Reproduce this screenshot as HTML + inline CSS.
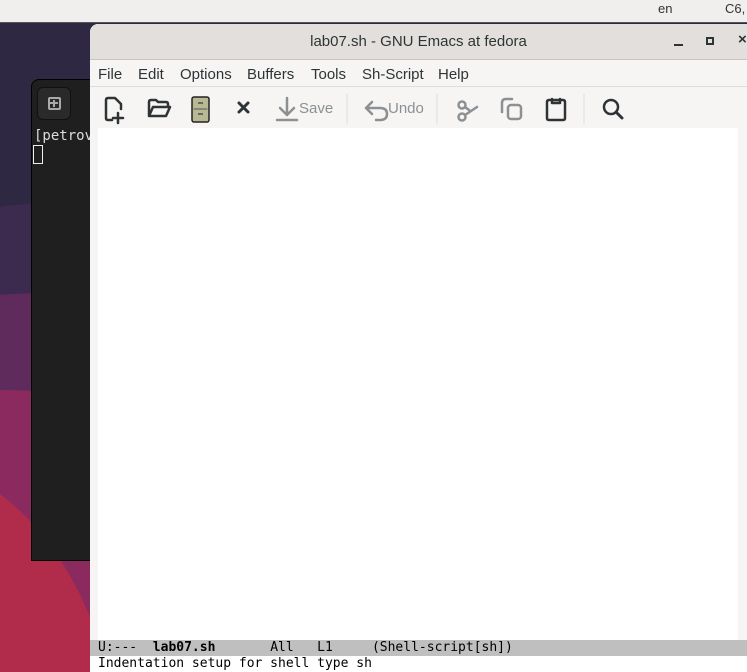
<!DOCTYPE html>
<html><head><meta charset="utf-8"><style>
*{margin:0;padding:0;box-sizing:border-box}
html,body{width:747px;height:672px;overflow:hidden}
body{position:relative;background:#2f2842;font-family:"Liberation Sans",sans-serif}
.abs{position:absolute}
.bg{left:0;top:0;width:747px;height:672px;overflow:hidden}
.top{left:0;top:0;width:747px;height:23px;background:#f0efee;border-bottom:1px solid #555}
.top span{position:absolute;top:1px;font-size:13px;color:#333}
.band{border-radius:50%}
.term{left:31px;top:79px;width:70px;height:482px;background:#1f1f1f;border:1px solid #000;border-radius:8px 0 0 0}
.emacs{left:90px;top:24px;width:657px;height:648px;background:#f6f5f4;border-radius:8px 0 0 0;overflow:hidden}
.title{height:36px;background:#e2dfdc;border-bottom:1px solid #c8c4c0;text-align:center;font-size:15px;line-height:36px;color:#2e3436}
.menu{height:27px;border-bottom:1px solid #ddd;font-size:15px;color:#2e3436}
.menu span{position:absolute;top:42px}
.tb{position:absolute;top:64px;height:40px;left:0;right:0}
.mono{font-family:"DejaVu Sans Mono","Liberation Mono",monospace;font-size:13px}
</style></head><body>
<div class="abs bg">
<div class="abs band" style="left:-500px;top:200px;width:1200px;height:1000px;background:#3c2a4f"></div>
<div class="abs band" style="left:-500px;top:293px;width:1100px;height:900px;background:#5e2b5c"></div>
<div class="abs band" style="left:-500px;top:390px;width:1000px;height:800px;background:#8a2a5e"></div>
<div class="abs band" style="left:-340px;top:455px;width:460px;height:640px;background:#b02c4a"></div>
</div>
<div class="abs top"><span style="left:658px">en</span><span style="left:725px">C6,</span></div>
<div class="abs term">
 <div class="abs" style="left:5px;top:7px;width:34px;height:33px;border:1px solid #111;border-radius:6px;background:#2a2a2a"></div>
 <div class="abs" style="left:16px;top:17px;width:13px;height:13px;border:2px solid #aaa;border-radius:2px"></div>
 <div class="abs" style="left:21px;top:20px;width:2px;height:7px;background:#aaa"></div>
 <div class="abs" style="left:18px;top:22px;width:8px;height:2px;background:#aaa"></div>
 <div class="abs mono" style="left:2px;top:48px;color:#ddd;font-size:14px">[petrov</div>
 <div class="abs" style="left:1px;top:65px;width:10px;height:19px;border:1px solid #eee"></div>
</div>
<div class="abs emacs">
 <div class="title">lab07.sh - GNU Emacs at fedora</div>
 <div class="abs" style="left:584px;top:20px;width:9px;height:2px;background:#2e3436"></div>
 <div class="abs" style="left:616px;top:13px;width:8px;height:8px;border:2px solid #2e3436"></div>
 <div class="abs" style="left:648px;top:7px;font-size:15px;color:#2e3436;font-weight:bold">×</div>
 <div class="menu"><span style="left:8px">File</span><span style="left:48px">Edit</span><span style="left:90px">Options</span><span style="left:157px">Buffers</span><span style="left:221px">Tools</span><span style="left:272px">Sh-Script</span><span style="left:348px">Help</span></div>
 <div class="tb">
  <svg width="657" height="40" viewBox="0 0 657 40" style="position:absolute;left:0;top:0" fill="none" stroke-linecap="round" stroke-linejoin="round">
   <g stroke="#2e3436" stroke-width="2.5">
    <path d="M22 32 H18 Q16 32 16 30 V12 Q16 10 18 10 H25 L31 16 V21"/><path d="M28 25 V35 M23 30 H33"/>
    <path d="M59 28 V14 Q59 12 61 12 H66 L68 14 H76 Q78 14 78 16 V18 M59 28 L63 19 H80 L76 28 Z"/>
    <path d="M149 15 L158 24 M158 15 L149 24" stroke-width="3"/>
    <path d="M457 30 V14 Q457 12 459 12 H473 Q475 12 475 14 V30 Q475 32 473 32 H459 Q457 32 457 30 Z M462 11 V15 H470 V11"/>
    <circle cx="521" cy="19" r="7"/><path d="M526 24 L532 30" stroke-width="3"/>
   </g>
   <g stroke="#8d9093" stroke-width="2.5">
    <path d="M197 10 V27 M190 20 L197 27 L204 20 M187 32 H207"/>
    <path d="M276 20 H290 Q297 20 297 26 Q297 32 290 32 H286 M276 20 L282 14 M276 20 L282 26"/>
    <circle cx="372" cy="29" r="3.5"/><circle cx="372" cy="17" r="3.5"/><path d="M375 27 L387 19 M375 19 L379 22"/>
    <path d="M412 24 V15 Q412 11 416 11 H422"/><rect x="418" y="17" width="13" height="14" rx="3"/>
   </g>
   <rect x="102" y="9" width="17" height="25" rx="2" fill="#b6b992" stroke="#222" stroke-width="1.5"/>
   <path d="M104 21 H117" stroke="#555" stroke-width="1"/>
   <rect x="108" y="14" width="5" height="2" fill="#666"/><rect x="108" y="25" width="5" height="2" fill="#666"/>
   <line x1="257" y1="6" x2="257" y2="36" stroke="#ddd"/><line x1="347" y1="6" x2="347" y2="36" stroke="#ddd"/><line x1="494" y1="6" x2="494" y2="36" stroke="#ddd"/>
  </svg>
  <div class="abs" style="left:209px;top:12px;font-size:15px;color:#8d9093">Save</div>
  <div class="abs" style="left:298px;top:12px;font-size:15px;color:#8d9093">Undo</div>
 </div>
 <div class="abs" style="left:8px;top:104px;width:640px;height:512px;background:#fff"></div>
 <div class="abs mono" style="left:0;top:616px;width:657px;height:16px;background:#bfbfbf;color:#000;line-height:16px;white-space:pre;padding-left:8px">U:---  <b>lab07.sh</b>       All   L1     (Shell-script[sh])</div>
 <div class="abs mono" style="left:0;top:632px;width:657px;height:16px;background:#fff;color:#000;line-height:16px;white-space:pre;padding-left:8px">Indentation setup for shell type sh</div>
</div>
</body></html>
